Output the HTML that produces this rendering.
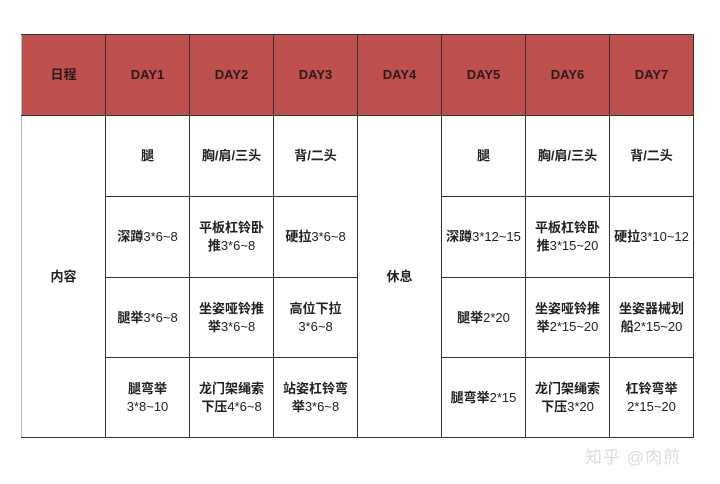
<!DOCTYPE html>
<html><head><meta charset="utf-8"><style>
body{margin:0;background:#fff;width:720px;height:484px;position:relative;overflow:hidden;font-family:"Liberation Sans","Noto Sans CJK SC",sans-serif;color:#222}
table{position:absolute;left:21px;top:34px;border-collapse:collapse;table-layout:fixed;width:672px}
td{border:1px solid #333;width:84px;text-align:center;vertical-align:middle;font-size:13px;line-height:18px;padding:0 4px;box-sizing:border-box}
tr.h td{background:#c0504d;height:81px;font-weight:bold;font-size:13px;color:#2a1a1a}
tr.r td{height:81px}
tr.r2 td{height:80px}
b{font-weight:bold}
td.l{border-left:1px solid #bbb}
.wm{position:absolute;left:585px;top:443px;font-size:17px;color:#ddd;letter-spacing:1px}
</style></head><body>
<table>
<tr class="h"><td class="l">日程</td><td>DAY1</td><td>DAY2</td><td>DAY3</td><td>DAY4</td><td>DAY5</td><td>DAY6</td><td>DAY7</td></tr>
<tr class="r"><td class="l" rowspan="4"><b>内容</b></td><td><b>腿</b></td><td><b>胸/肩/三头</b></td><td><b>背/二头</b></td><td rowspan="4"><b>休息</b></td><td><b>腿</b></td><td><b>胸/肩/三头</b></td><td><b>背/二头</b></td></tr>
<tr class="r"><td><b>深蹲</b>3*6~8</td><td><b>平板杠铃卧</b><br><b>推</b>3*6~8</td><td><b>硬拉</b>3*6~8</td><td style="padding:0"><b>深蹲</b>3*12~15</td><td><b>平板杠铃卧</b><br><b>推</b>3*15~20</td><td style="padding:0"><b>硬拉</b>3*10~12</td></tr>
<tr class="r2"><td><b>腿举</b>3*6~8</td><td><b>坐姿哑铃推</b><br><b>举</b>3*6~8</td><td><b>高位下拉</b><br>3*6~8</td><td><b>腿举</b>2*20</td><td><b>坐姿哑铃推</b><br><b>举</b>2*15~20</td><td><b>坐姿器械划</b><br><b>船</b>2*15~20</td></tr>
<tr class="r2"><td><b>腿弯举</b><br>3*8~10</td><td><b>龙门架绳索</b><br><b>下压</b>4*6~8</td><td><b>站姿杠铃弯</b><br><b>举</b>3*6~8</td><td><b>腿弯举</b>2*15</td><td><b>龙门架绳索</b><br><b>下压</b>3*20</td><td><b>杠铃弯举</b><br>2*15~20</td></tr>
</table>
<div class="wm">知乎 @肉煎</div>
</body></html>
